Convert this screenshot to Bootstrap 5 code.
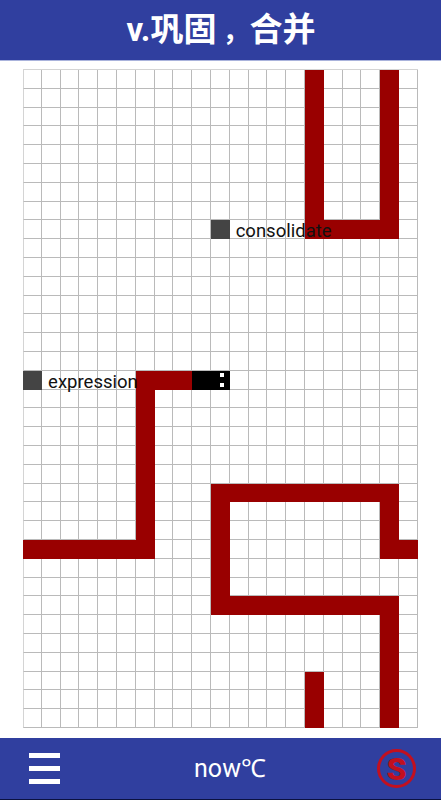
<!DOCTYPE html>
<html lang="en">
<head>
<meta charset="utf-8">
<title>v.巩固，合并</title>
<meta name="viewport" content="width=device-width, initial-scale=1">
<link rel="stylesheet" href="https://cdn.jsdelivr.net/npm/bootstrap@5.3.0/dist/css/bootstrap.min.css">
<style>
html,body{height:100%;overflow:hidden}
body{font-family:Roboto,"Noto Sans CJK SC",sans-serif;background:#fff}
.app-shell{height:800px}
.top-bar{height:61px;background:#303f9f;border-bottom:1px solid #aab3dc;color:#fff}
.top-title{font-size:33px;font-weight:700;line-height:1;margin-left:1px;font-family:Roboto,"Noto Sans CJK SC",sans-serif}
.title-comma{font-size:.82em;margin-left:.22em}
.board-wrap{height:677px;padding-top:8px}
.board{display:grid;grid-template-columns:repeat(21,18.8px);grid-template-rows:repeat(35,18.8px);width:394.8px;border-top:1px solid #d4d4d4}
.tile{border-right:1px solid #bababa;border-bottom:1px solid #bababa;position:relative;min-width:0}
.tile-first{border-left:1px solid #d4d4d4}
.tile-red{background:#990000;border-color:#990000}
.tile-black{background:#000;border-color:#000}
.tile-gray{background:#444;border-color:#444}
.tile-eyes::before,.tile-eyes::after{content:"";position:absolute;right:5px;width:4px;height:4px;background:#fff}
.tile-eyes::before{top:2px}
.tile-eyes::after{bottom:2px}
.word{position:absolute;left:24.6px;top:1px;font-size:18.5px;line-height:20px;color:#111;white-space:nowrap;z-index:2}
.tile-first .word{left:24px}
.bottom-bar{height:62px;background:#303f9f;border-bottom:1px solid #0b1140;color:#fff}
.burger{width:31px;gap:8px;margin-left:29px}
.burger-line{height:5px;background:#fff}
.now-text{font-size:25px;line-height:1;margin-left:23px;font-family:Roboto,"Liberation Sans",sans-serif}
.coin{width:39px;height:39px;border:3px solid #c2101f;border-radius:50%;color:#c2101f;font-size:32px;font-weight:900;line-height:1;margin-right:25px}
</style>
</head>
<body>
<div class="app-shell d-flex flex-column">
  <header class="top-bar d-flex align-items-center justify-content-center">
    <div class="top-title">v.巩固<span class="title-comma">，</span>合并</div>
  </header>
  <main class="board-wrap d-flex justify-content-center align-items-start">
    <div class="board" id="board"></div>
  </main>
  <footer class="bottom-bar d-flex align-items-center justify-content-between">
    <div class="burger d-flex flex-column"><div class="burger-line"></div><div class="burger-line"></div><div class="burger-line"></div></div>
    <div class="now-text">now℃</div>
    <div class="coin d-flex align-items-center justify-content-center">S</div>
  </footer>
</div>
<script>
var red={};
function seg(c1,r1,c2,r2){for(var c=c1;c<=c2;c++)for(var r=r1;r<=r2;r++)red[c+','+r]=1;}
seg(15,0,15,8);seg(19,0,19,8);seg(15,8,19,8);
seg(6,16,8,16);seg(6,16,6,25);seg(0,25,6,25);
seg(10,22,19,22);seg(10,22,10,28);seg(19,22,19,25);seg(19,25,20,25);seg(10,28,19,28);seg(19,28,19,34);
seg(15,32,15,34);
var b=document.getElementById('board');
for(var r=0;r<35;r++)for(var c=0;c<21;c++){
  var d=document.createElement('div');d.className='tile';var k=c+','+r;
  if(c===0)d.className+=' tile-first';
  if(red[k])d.className+=' tile-red';
  if(r===16&&c===9)d.className+=' tile-black';
  if(r===16&&c===10)d.className+=' tile-black tile-eyes';
  if((r===16&&c===0)||(r===8&&c===10)){d.className+=' tile-gray';
    var s=document.createElement('span');s.className='word';s.textContent=r===16?'expression':'consolidate';d.appendChild(s);d.style.zIndex=2;}
  b.appendChild(d);
}
</script>
<script src="https://cdn.jsdelivr.net/npm/bootstrap@5.3.0/dist/js/bootstrap.bundle.min.js"></script>
</body>
</html>
